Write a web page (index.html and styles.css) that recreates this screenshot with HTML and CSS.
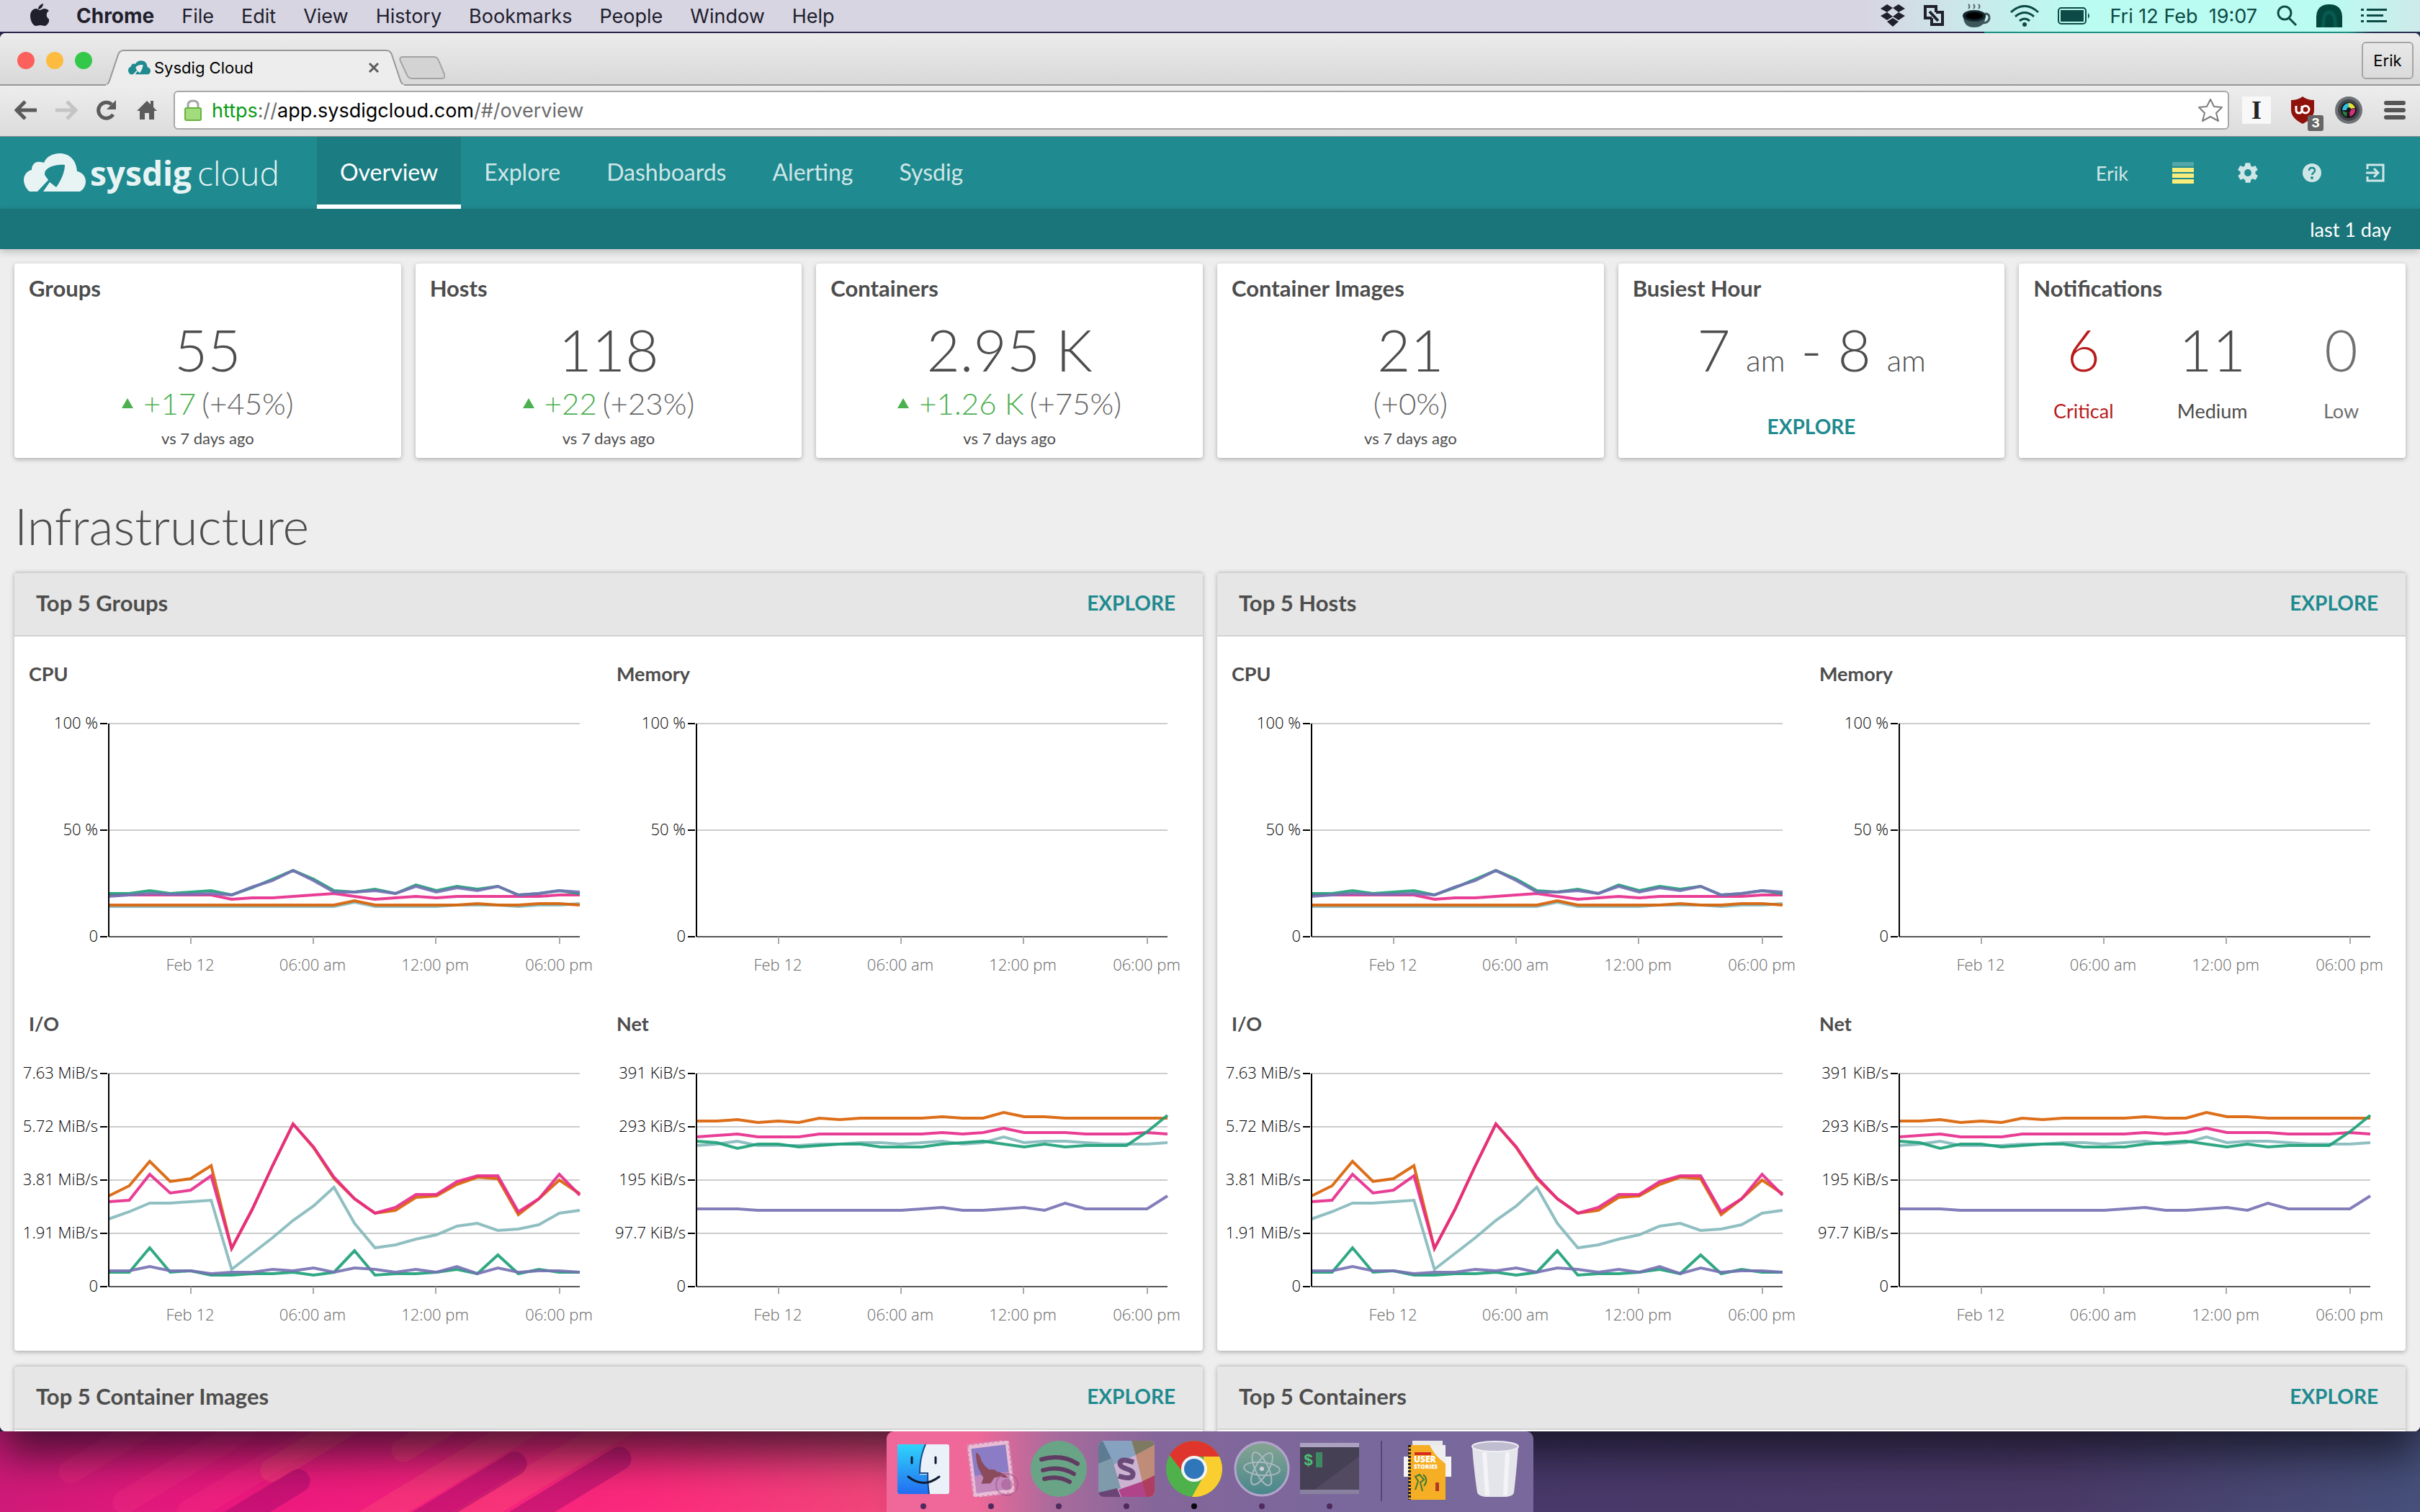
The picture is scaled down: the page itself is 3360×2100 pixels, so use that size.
FILE: index.html
```html
<!DOCTYPE html>
<html lang="en">
<head>
<meta charset="utf-8">
<title>Sysdig Cloud</title>
<link rel="stylesheet" href="styles.css">
</head>
<body>
<svg width="0" height="0" class="defs" aria-hidden="true">
  <symbol id="cloud-mark" viewBox="0 0 86 54">
    <path fill-rule="evenodd" d="M8 53C3 49 0 43 0 37c0-7 5-13 11-14C11 16 16 11 22 12c2 0 4 0 6 1C31 5 40 0 50 0c13 0 23 9 24 25 7 1 12 7 12 14 0 6-3 11-8 14H27l9-13 9 7C51 39 57 27 57 16 45 15 30 19 29 28c0 4 4 6 5 9L19 53Z"/>
  </symbol>
</svg>
<div class="desktop">
  <header class="menubar">
    <nav class="menus" aria-label="Menu bar">
      <button class="menu apple" aria-label="Apple"><svg width="26" height="34" viewBox="0 0 26 34"><path d="M18 0c0 4-3 8-7 8 0-4 3-7 7-8ZM13 9c2 0 4-2 7-2 2 0 4 1 6 3-5 3-4 10 1 12-1 4-4 9-7 9-2 0-4-1-6-1s-4 1-6 1C4 31 0 24 0 17 0 11 4 7 8 7c2 0 4 2 5 2Z"/></svg></button>
      <button class="menu app-name">Chrome</button>
      <button class="menu">File</button>
      <button class="menu">Edit</button>
      <button class="menu">View</button>
      <button class="menu">History</button>
      <button class="menu">Bookmarks</button>
      <button class="menu">People</button>
      <button class="menu">Window</button>
      <button class="menu">Help</button>
    </nav>
    <div class="status">
      <svg width="34" height="32" viewBox="0 0 34 32"><path d="M9 0l8 5-8 6-9-5ZM25 0l9 6-9 5-8-6ZM0 16l9-5 8 6-8 5ZM34 16l-9-5-8 6 8 5ZM17 19l8 5-8 7-8-7Z"/></svg>
      <svg width="28" height="30" viewBox="0 0 28 30"><path d="M11 18H2V2h15v8" fill="none" stroke="#20202c" stroke-width="4"/><path d="M17 10h9v17H11V18" fill="none" stroke="#20202c" stroke-width="4"/><path d="M8 9l12 13" stroke="#20202c" stroke-width="4"/></svg>
      <svg width="40" height="34" viewBox="0 0 40 34"><path d="M8 7q3-3 0-6M15 7q3-3 0-6M22 7q3-3 0-6" stroke="#59656b" stroke-width="2" fill="none"/><path d="M1 15h31q0 18-16 18T1 15Z" fill="#3c5659"/><ellipse cx="16" cy="17" rx="16" ry="8" fill="#14292e"/><ellipse cx="16" cy="17" rx="12" ry="5" fill="#000"/><path d="M31 14q7 0 6 7-2 6-9 6" fill="none" stroke="#3c5659" stroke-width="3"/></svg>
      <svg width="40" height="30" viewBox="0 0 40 30"><g fill="none" stroke="#0d4a45" stroke-width="3"><path d="M1 10Q20-7 39 10M7 16q13-11 26 0M13 22q7-6 14 0"/></g><circle cx="20" cy="27" r="3" fill="#0d4a45"/></svg>
      <svg width="46" height="24" viewBox="0 0 46 24"><rect x="1" y="1" width="38" height="22" rx="4" fill="none" stroke="#0d4a45" stroke-width="2"/><rect x="4" y="4" width="32" height="16" fill="#0d4a45"/><path d="M42 8q4 4 0 8Z" fill="#0d4a45"/></svg>
      <time class="clock">Fri 12 Feb&nbsp; 19:07</time>
      <svg width="30" height="30" viewBox="0 0 30 30" fill="none" stroke="#0d4a45" stroke-width="3"><circle cx="12" cy="11" r="9"/><path d="M18 18l10 10"/></svg>
      <svg width="36" height="32" viewBox="0 0 36 32"><path d="M0 32V17Q1 0 18 0t18 17v15Z" fill="#02463d"/><path d="M7 32q0-24 11-24t11 24Z" fill="#075a50"/><path d="M12 32q0-18 6-18t6 18Z" fill="#02463d"/></svg>
      <svg width="36" height="22" viewBox="0 0 36 22" fill="#0d4a45"><path d="M0 1h4v3H0ZM0 9h4v3H0ZM0 17h4v3H0ZM8 1h28v3H8ZM8 9h23v3H8ZM8 17h28v3H8Z"/></svg>
    </div>
  </header>

  <section class="window">
    <div class="tabstrip">
      <div class="lights">
        <button class="light close" aria-label="Close"></button>
        <button class="light minimise" aria-label="Minimise"></button>
        <button class="light zoom" aria-label="Zoom"></button>
      </div>
      <div class="tab">
        <svg class="tab-shape" viewBox="0 0 418 50" preserveAspectRatio="none"><path d="M0 50Q5 49 7 43L19 7q2-6 8-6h364q6 0 8 6l12 36q2 6 7 7" fill="#ededed" stroke="#979797" stroke-width="2"/><path d="M2 50h414" stroke="#ededed" stroke-width="3"/></svg>
        <svg class="favicon" width="31" height="20" fill="#1f8a8f"><use href="#cloud-mark"/></svg>
        <span class="tab-title">Sysdig Cloud</span>
        <button class="tab-close" aria-label="Close tab"><svg width="16" height="16" viewBox="0 0 16 16"><path d="M2 2l12 12M14 2L2 14" stroke="#5c5c5c" stroke-width="3"/></svg></button>
      </div>
      <button class="new-tab" aria-label="New tab"><svg width="64" height="32" viewBox="0 0 64 32"><path d="M5 1h43q5 0 7 5l8 19q2 6-4 6H18q-5 0-7-5L2 7Q0 1 5 1Z" fill="#d3d3d3" stroke="#a3a3a3" stroke-width="2"/></svg></button>
      <button class="profile">Erik</button>
    </div>
    <div class="toolbar">
      <button class="tool" aria-label="Back"><svg width="32" height="28" viewBox="0 0 32 28"><path d="M15 2L3 14l12 12M4 14h27" fill="none" stroke="#5b5b5b" stroke-width="5"/></svg></button>
      <button class="tool" aria-label="Forward"><svg width="32" height="28" viewBox="0 0 32 28"><path d="M17 2l12 12-12 12M28 14H1" fill="none" stroke="#c4c4c4" stroke-width="5"/></svg></button>
      <button class="tool" aria-label="Reload"><svg width="32" height="28" viewBox="0 0 32 28"><path d="M25 20A11 11 0 1 1 23 6" fill="none" stroke="#5b5b5b" stroke-width="5"/><path d="M29 0v13H16Z" fill="#5b5b5b"/></svg></button>
      <button class="tool" aria-label="Home"><svg width="32" height="28" viewBox="0 0 32 28"><path d="M16 1l5 5V1h4v9l5 5h-4v12h-7v-9h-6v9H6V15H2Z" fill="#5b5b5b"/></svg></button>
      <div class="address">
        <svg width="24" height="30" viewBox="0 0 24 30"><path d="M5 13V8q0-6 7-6t7 6v5" fill="none" stroke="#a5a5a5" stroke-width="3"/><rect x="1" y="12" width="22" height="17" rx="2" fill="#a2dc7c" stroke="#67b43e" stroke-width="2"/></svg>
        <div class="url" role="textbox" contenteditable="true" spellcheck="false" aria-label="Address"><span class="scheme">https</span><span class="dim">://</span>app.sysdigcloud.com<span class="dim">/#/overview</span></div>
        <svg width="36" height="34" viewBox="0 0 36 34"><path d="M18 2l5 10 11 1-8 8 3 11-11-6-11 6 3-11-8-8 11-1Z" fill="#fff" stroke="#7d7d7d" stroke-width="2" stroke-linejoin="round"/></svg>
      </div>
      <div class="extensions">
        <button class="ext instapaper" aria-label="Instapaper">I</button>
        <button class="ext" aria-label="uBlock Origin"><svg width="36" height="38" viewBox="0 0 36 38"><path d="M18 0q6 5 16 5v14q0 11-16 19Q2 30 2 19V5q10 0 16-5Z" fill="#8f110c"/><path d="M9 13v6q0 4 4 4t4-4v-6" fill="none" stroke="#fff" stroke-width="3"/><circle cx="22" cy="18" r="5" fill="none" stroke="#fff" stroke-width="3"/></svg><span class="count">3</span></button>
        <button class="ext" aria-label="Camera"><svg width="38" height="38" viewBox="0 0 38 38"><circle cx="19" cy="19" r="19" fill="#6e7276"/><circle cx="19" cy="19" r="15" fill="#45494e"/><circle cx="19" cy="19" r="11" fill="#15151c"/><path d="M19 9a10 10 0 0 0-9 10l6 0a4 4 0 0 1 3-4Z" fill="#2fc3e0"/><path d="M19 9a10 10 0 0 1 9 7l-6 1a4 4 0 0 0-3-2Z" fill="#e6e03a"/><path d="M28 17a10 10 0 0 1-7 11l-1-6a4 4 0 0 0 2-4Z" fill="#d5307b"/><path d="M10 20a10 10 0 0 0 6 8l1-6Z" fill="#2c7a3c"/></svg></button>
        <button class="ext" aria-label="Menu"><svg width="30" height="26" viewBox="0 0 30 26" fill="#555"><rect width="30" height="6" rx="3"/><rect y="10" width="30" height="6" rx="3"/><rect y="20" width="30" height="6" rx="3"/></svg></button>
      </div>
    </div>

    <div class="app">
      <header class="app-nav">
        <a class="brand" href="#/"><svg width="86" height="54" fill="#e8f4f4"><use href="#cloud-mark"/></svg><span class="wordmark"><b>sysdig</b>cloud</span></a>
        <nav class="links" aria-label="Main">
          <a class="link active" href="#/overview">Overview</a>
          <a class="link" href="#/explore">Explore</a>
          <a class="link" href="#/dashboards">Dashboards</a>
          <a class="link" href="#/alerting">Alerting</a>
          <a class="link" href="#/sysdig">Sysdig</a>
        </nav>
        <div class="account">
          <a class="user" href="#/profile">Erik</a>
          <a href="#/usage" aria-label="Usage"><svg width="30" height="30" viewBox="0 0 30 30"><rect width="30" height="6" rx="1" fill="#52a6aa"/><path d="M0 8h30v6H0ZM0 16h30v6H0ZM0 24h30v6H0Z" fill="#f8ec7a"/></svg></a>
          <a href="#/settings" aria-label="Settings"><svg width="28" height="28" viewBox="2 2 20 20"><path fill="#cfe6e7" d="M19.4 13c0-.3.1-.6.1-1s0-.7-.1-1l2.1-1.600c.2-.2.2-.4.1-.6l-2-3.500c-.1-.2-.4-.3-.6-.2l-2.500 1c-.5-.4-1.100-.7-1.700-1l-.4-2.600c0-.2-.2-.4-.5-.4h-4c-.2 0-.4.2-.5.4l-.4 2.600c-.6.300-1.200.6-1.700 1l-2.500-1c-.2-.1-.5 0-.6.2l-2 3.500c-.1.2-.1.5.1.600L4.600 11c0 .3-.1.600-.1 1s0 .7.1 1l-2.100 1.600c-.2.200-.2.400-.1.600l2 3.500c.1.200.4.300.6.200l2.500-1c.5.400 1.100.7 1.700 1l.4 2.600c0 .2.2.4.5.4h4c.2 0 .4-.2.500-.4l.4-2.600c.6-.3 1.200-.6 1.700-1l2.500 1c.2.100.5 0 .6-.2l2-3.500c.1-.2.1-.5-.1-.6ZM12 15.500a3.500 3.500 0 1 1 0-7 3.500 3.500 0 0 1 0 7Z"/></svg></a>
          <a href="#/help" aria-label="Help"><svg width="28" height="28" viewBox="0 0 28 28"><circle cx="14" cy="14" r="13" fill="#cfe6e7"/><path d="M10 11q0-4 4-4t4 4q0 2-2 3-2 2-2 3" fill="none" stroke="#1f8a8f" stroke-width="2.500"/><circle cx="14" cy="21" r="2" fill="#1f8a8f"/></svg></a>
          <a href="#/logout" aria-label="Log out"><svg width="26" height="26" viewBox="0 0 26 26" fill="none" stroke="#cfe6e7" stroke-width="3"><path d="M2 8V2h22v22H2v-6M0 13h16M11 7l6 6-6 6"/></svg></a>
        </div>
      </header>
      <div class="timebar"><button class="range">last 1 day</button></div>

      <main class="content">
        <div class="cards">
          <section class="card">
            <h2>Groups</h2>
            <p class="figure">55</p>
            <p class="delta"><i class="up"></i><span class="gain">+17</span> (+45%)</p>
            <p class="since">vs 7 days ago</p>
          </section>
          <section class="card">
            <h2>Hosts</h2>
            <p class="figure">118</p>
            <p class="delta"><i class="up"></i><span class="gain">+22</span> (+23%)</p>
            <p class="since">vs 7 days ago</p>
          </section>
          <section class="card">
            <h2>Containers</h2>
            <p class="figure">2.95 K</p>
            <p class="delta"><i class="up"></i><span class="gain">+1.26 K</span> (+75%)</p>
            <p class="since">vs 7 days ago</p>
          </section>
          <section class="card">
            <h2>Container Images</h2>
            <p class="figure">21</p>
            <p class="delta">(+0%)</p>
            <p class="since">vs 7 days ago</p>
          </section>
          <section class="card">
            <h2>Busiest Hour</h2>
            <p class="figure">7 <small>am</small> - 8 <small>am</small></p>
            <a class="explore" href="#/explore">EXPLORE</a>
          </section>
          <section class="card">
            <h2>Notifications</h2>
            <div class="levels">
              <div class="level critical"><p class="figure">6</p><p class="level-name">Critical</p></div>
              <div class="level"><p class="figure">11</p><p class="level-name">Medium</p></div>
              <div class="level low"><p class="figure">0</p><p class="level-name">Low</p></div>
            </div>
          </section>
        </div>

        <h1>Infrastructure</h1>

        <div class="panels">
          <section class="panel">
            <header class="panel-head"><h2>Top 5 Groups</h2><a class="explore" href="#/explore/groups">EXPLORE</a></header>
            <div class="charts">
              <figure><figcaption>CPU</figcaption><svg class="chart" data-chart="cpu"></svg></figure>
              <figure><figcaption>Memory</figcaption><svg class="chart" data-chart="memory"></svg></figure>
              <figure><figcaption>I/O</figcaption><svg class="chart" data-chart="io"></svg></figure>
              <figure><figcaption>Net</figcaption><svg class="chart" data-chart="net"></svg></figure>
            </div>
          </section>
          <section class="panel">
            <header class="panel-head"><h2>Top 5 Hosts</h2><a class="explore" href="#/explore/hosts">EXPLORE</a></header>
            <div class="charts">
              <figure><figcaption>CPU</figcaption><svg class="chart" data-chart="cpu"></svg></figure>
              <figure><figcaption>Memory</figcaption><svg class="chart" data-chart="memory"></svg></figure>
              <figure><figcaption>I/O</figcaption><svg class="chart" data-chart="io"></svg></figure>
              <figure><figcaption>Net</figcaption><svg class="chart" data-chart="net"></svg></figure>
            </div>
          </section>
          <section class="panel">
            <header class="panel-head"><h2>Top 5 Container Images</h2><a class="explore" href="#/explore/images">EXPLORE</a></header>
            <div class="charts"></div>
          </section>
          <section class="panel">
            <header class="panel-head"><h2>Top 5 Containers</h2><a class="explore" href="#/explore/containers">EXPLORE</a></header>
            <div class="charts"></div>
          </section>
        </div>
      </main>
    </div>
  </section>

  <footer class="dock-area">
    <svg class="streaks" width="1230" height="112" viewBox="0 0 1230 112" stroke-width="33" stroke-linecap="round">
      <g stroke="#ff3a86" stroke-opacity=".2"><path d="M98 56L263-44M173 98L338-2M262 112L450-2"/></g>
      <g stroke="#ff5a74" stroke-opacity=".3"><path d="M378 54L543-46M560 26L725-74"/><path d="M470 150L780-38M600 150L900-32" stroke-width="36"/></g>
      <g stroke="#a80a6c" stroke-opacity=".5"><path d="M414 69L249 169M715 45L499 176M860 38L630 178"/></g>
    </svg>
    <div class="dock">
      <button class="dock-item dot" aria-label="Finder"><svg width="78" height="78" viewBox="0 0 78 78"><defs><linearGradient id="finder" x1="0" y1="0" x2="0" y2="1"><stop offset="0" stop-color="#2fd4fb"/><stop offset="1" stop-color="#236df0"/></linearGradient></defs><rect x="3" y="5" width="72" height="69" rx="3" fill="#eaf1f9"/><path d="M42 5H6q-3 0-3 3v63q0 3 3 3h41q-2-13-2-27H34q0-24 8-42Z" fill="url(#finder)"/><path d="M42 5q-8 18-8 40h11q0 16 2 29" fill="none" stroke="#1b4a86" stroke-width="2"/><path d="M23 23v8M56 23v8M18 50q21 17 43 0" fill="none" stroke="#101c30" stroke-width="3" stroke-linecap="round"/></svg></button>
      <button class="dock-item dot" aria-label="Mail"><svg width="78" height="78" viewBox="0 0 78 78"><g transform="rotate(-7 39 39)"><rect x="10" y="2" width="58" height="74" fill="#e8bcd4"/><rect x="10" y="2" width="58" height="74" fill="none" stroke="#d97fae" stroke-width="3" stroke-dasharray="3 4"/><rect x="15" y="8" width="48" height="62" fill="#8c7cc6"/><path d="M15 46h48v24H15Z" fill="#c389bd"/><path d="M21 14q5 2 6 12 4 10 10 14 6-1 10 4 8 2 14 10-6 0-10-3l-9 1-6 7-13-1 4-8q-9-18-6-36Z" fill="#8b4b5c"/></g><circle cx="61" cy="61" r="15" fill="none" stroke="#a0568a" stroke-width="2" opacity=".6"/><circle cx="61" cy="61" r="8" fill="#a0568a" opacity=".5"/></svg></button>
      <button class="dock-item dot" aria-label="Spotify"><svg width="78" height="78" viewBox="0 0 78 78"><circle cx="39" cy="39" r="39" fill="#6aa487"/><path d="M15 26q28-8 50 6M17 41q23-7 43 5M19 53q19-5 35 4" fill="none" stroke="#603c62" stroke-width="6" stroke-linecap="round"/></svg></button>
      <button class="dock-item dot" aria-label="Slack"><svg width="78" height="78" viewBox="0 0 78 78"><clipPath id="slack-clip"><rect width="78" height="78" rx="7"/></clipPath><g clip-path="url(#slack-clip)"><rect width="78" height="78" fill="#cdb3d2"/><path d="M6 0h40l6 20-33 14Z" fill="#86a2c0"/><path d="M0 0h6l12 25L0 32Z" fill="#5d7c91"/><path d="M46 0h32v6L52 20Z" fill="#7d7a61"/><path d="M78 6v42l-17 9-9-37Z" fill="#bf8c78"/><path d="M78 48v30h-12l-6-21Z" fill="#ae3d60"/><path d="M60 57l7 21H32l-4-10Z" fill="#b0448b"/><path d="M0 32l19-8 12 42-31 7Z" fill="#7e9aab"/><path d="M0 72l26-6 5 12H0Z" fill="#6a4474"/></g><path d="M49 30q-19-7-19 2 0 4 9 7 10 3 9 8-1 8-20 2" fill="none" stroke="#6c4a7a" stroke-width="7"/></svg></button>
      <button class="dock-item dot front" aria-label="Chrome"><svg width="78" height="78" viewBox="0 0 78 78"><circle cx="39" cy="39" r="39" fill="#4fb14c"/><path d="M5 20A39 39 0 0 1 74 22H39L22 42Z" fill="#e0352d"/><path d="M74 22A39 39 0 0 1 36 78l18-32-2-24Z" fill="#fbce2f"/><circle cx="39" cy="39" r="18" fill="#f3f3f3"/><circle cx="39" cy="39" r="14" fill="#2f76bb"/></svg></button>
      <button class="dock-item dot" aria-label="Atom"><svg width="78" height="78" viewBox="0 0 78 78"><defs><linearGradient id="atom" x1="0" y1="0" x2="0" y2="1"><stop offset="0" stop-color="#86a592"/><stop offset="1" stop-color="#47868c"/></linearGradient></defs><circle cx="39" cy="39" r="37" fill="url(#atom)" stroke="#b5a5cc" stroke-width="3"/><g fill="none" stroke="#a9b8bf" stroke-width="2"><ellipse cx="39" cy="39" rx="25" ry="9" transform="rotate(5 39 39)"/><ellipse cx="39" cy="39" rx="25" ry="9" transform="rotate(65 39 39)"/><ellipse cx="39" cy="39" rx="25" ry="9" transform="rotate(121 39 39)"/></g><circle cx="39" cy="39" r="3" fill="#d0cfdc"/></svg></button>
      <button class="dock-item dot terminal" aria-label="Terminal"><svg width="82" height="78" viewBox="0 0 82 78"><rect y="3" width="82" height="71" fill="#464055"/><rect y="3" width="82" height="6" fill="#aba1c1"/><rect y="68" width="82" height="6" fill="#8a809f"/><path d="M20 68L82 22v46Z" fill="#514a60"/><rect x="22" y="16" width="9" height="21" fill="#3d8a62"/><text x="5" y="34" font-family="Liberation Mono" font-weight="700" font-size="22" fill="#4bc274">$</text></svg></button>
      <span class="divider"></span>
      <button class="dock-item" aria-label="Documents"><svg width="78" height="86" viewBox="0 0 78 86"><path d="M6 22h66v28H6Z" fill="#f4f4f4"/><path d="M18-3h42v30H18Z" fill="#e9e9e9"/><path d="M13 6h51v76H13Z" fill="#f6af25"/><path d="M42 6h22v26Q48 20 42 6Z" fill="#eee"/><path d="M14 6v76" stroke="#222" stroke-width="4" stroke-dasharray="3 2"/><path d="M21 16h23v4H21Z" fill="#d52b25"/><text x="20" y="30" font-family="Open Sans" font-weight="800" font-size="12" fill="#fff">USER</text><text x="20" y="39" font-family="Open Sans" font-weight="800" font-size="8" fill="#fff">STORIES</text><path d="M22 68l4-12-4-6 6-3 6 7-5 4 3 12M33 47q8 7 1 16" fill="none" stroke="#3c7c35" stroke-width="2"/><path d="M50 58h5v12h-5Z" fill="#b13b28"/></svg></button>
      <button class="dock-item" aria-label="Trash"><svg width="78" height="78" viewBox="0 0 78 78"><path d="M7 8q2 30 7 64 2 7 26 7t25-7q4-34 6-64Z" fill="#e4e5ea"/><path d="M24 16l4 60M56 16l-3 60" stroke="#f4f4f6" stroke-width="6"/><ellipse cx="39" cy="8" rx="32" ry="7" fill="#c0bdd0" stroke="#efeff4" stroke-width="2"/></svg></button>
    </div>
  </footer>
</div>
<script src="charts.js"></script>
</body>
</html>
```
FILE: styles.css
```css
* { box-sizing: border-box; }
body { margin: 0; }
h1, h2, p, figure { margin: 0; }
button { margin: 0; padding: 0; border: 0; background: none; font: inherit; color: inherit; }
a { color: inherit; text-decoration: none; }
svg { display: block; flex: none; }
.defs { position: absolute; }

.desktop {
  display: grid;
  grid-template-rows: 44px minmax(0, 1fr) 112px;
  height: 100vh;
  overflow: hidden;
  font-family: Inter, "Liberation Sans", sans-serif;
  background: linear-gradient(90deg, #2d2650 82%, #1d9f8f 82%, #1d9f8f 97%, #2b3357 98%);
}

/* Menu bar */
.menubar {
  display: flex;
  justify-content: space-between;
  align-items: center;
  padding: 0 46px 0 42px;
  background: linear-gradient(90deg, #d8d5e3 77%, #bafcf2 86%, #bafcf2 96%, #cdeaea);
  color: #20202c;
  font-size: 27px;
  position: relative;
  z-index: 2;
}
.menus { display: flex; align-items: center; gap: 38px; }
.menu { white-space: nowrap; }
.apple { fill: #20202c; }
.app-name { font-size: 28px; font-weight: 700; }
.status { display: flex; align-items: center; gap: 26px; fill: #20202c; }
.clock { color: #0d4a45; white-space: pre; }

/* Browser window */
.window {
  display: flex;
  flex-direction: column;
  margin-top: 2px;
  border-radius: 8px;
  overflow: hidden;
  background: #eee;
  box-shadow: 0 32px 60px rgba(10, 10, 20, .7);
  position: relative;
  z-index: 1;
}
.tabstrip {
  display: flex;
  align-items: flex-end;
  flex: none;
  height: 73px;
  padding: 0 9px 0 24px;
  border-bottom: 2px solid #979797;
  background: linear-gradient(#ececec, #d8d8d8);
  font-size: 22px;
  color: #000;
}
.lights { display: flex; gap: 16px; margin-bottom: 21px; }
.light { width: 24px; height: 24px; border-radius: 50%; }
.close { background: #fc605c; }
.minimise { background: #fdbc40; }
.zoom { background: #34c84a; }
.tab {
  display: flex;
  align-items: center;
  position: relative;
  width: 418px;
  height: 50px;
  margin: 0 0 -2px 17px;
  padding: 0 36px 0 33px;
}
.tab-shape { position: absolute; inset: 0; width: 100%; height: 100%; }
.favicon, .tab-title, .tab-close { position: relative; }
.tab-title { flex: 1; margin-left: 5px; }
.new-tab { margin: 0 0 7px -9px; }
.profile {
  margin: 0 0 7px auto;
  width: 72px;
  height: 52px;
  border: 2px solid #a5a5a5;
  border-radius: 6px;
}
.toolbar {
  display: flex;
  align-items: center;
  flex: none;
  gap: 24px;
  height: 71px;
  padding: 0 15px 2px 20px;
  border-bottom: 1px solid #8a8a8a;
  background: linear-gradient(#ededed, #dcdcdc);
}
.address {
  display: flex;
  align-items: center;
  flex: 1;
  height: 54px;
  margin: 0 -6px 0 -3px;
  padding: 0 6px 0 13px;
  border: 2px solid #a8a8a8;
  border-radius: 6px;
  background: #fff;
  font-size: 27px;
  color: #000;
}
.url { flex: 1; margin-left: 14px; outline: 0; }
.scheme { color: #0a9b15; }
.dim { color: #6b6b6b; }
.extensions { display: flex; align-items: center; gap: 24px; }
.ext { display: grid; place-items: center; width: 40px; height: 38px; position: relative; }
.instapaper { background: #f8f8f8; font: 700 36px/38px "Liberation Serif", serif; color: #222; }
.count {
  position: absolute;
  right: -9px;
  bottom: -10px;
  width: 22px;
  height: 22px;
  border-radius: 3px;
  background: #666;
  color: #fff;
  font: 700 18px/22px Inter, sans-serif;
}

/* App chrome */
.app { flex: 1; min-height: 0; font-family: Lato, "Open Sans", sans-serif; color: #4d4d4d; background: #eee; }
.app-nav { display: flex; height: 100px; background: #1f8a8f; color: #cfe6e7; font-size: 32px; }
.brand {
  display: flex;
  align-items: center;
  gap: 6px;
  width: 440px;
  padding-left: 33px;
  font: 300 46px/100px "Open Sans", sans-serif;
  color: #e8f4f4;
  white-space: nowrap;
}
.wordmark { display: flex; gap: 8px; }
.wordmark b { font-weight: 700; }
.links { display: flex; }
.link { padding: 0 32px; line-height: 98px; border-bottom: 6px solid transparent; height: 100px; }
.active { background: #1b7c81; border-color: #fff; color: #fff; }
.account { display: flex; align-items: center; gap: 61px; margin-left: auto; padding-right: 49px; }
.user { font-size: 27px; }
.timebar {
  display: flex;
  justify-content: flex-end;
  height: 56px;
  padding-right: 40px;
  background: #1a757a;
  box-shadow: 0 4px 10px rgba(0, 0, 0, .2);
  color: #fff;
  font-size: 27px;
}
.content { padding: 20px; }

/* Summary cards */
.cards { display: grid; grid-template-columns: repeat(6, 1fr); gap: 20px; }
.card, .panel { background: #fff; border-radius: 4px; box-shadow: 0 2px 6px rgba(0, 0, 0, .28); }
.card { min-height: 270px; padding-top: 14px; text-align: center; }
.card h2 { padding-left: 20px; text-align: left; }
h2 { font-size: 31px; line-height: 40px; font-weight: 700; }
.figure { margin-top: 21px; font-size: 80px; line-height: 88px; font-weight: 300; white-space: nowrap; }
.figure small { font-size: 42px; }
.delta { display: flex; justify-content: center; align-items: center; gap: 8px; font-size: 42px; line-height: 62px; font-weight: 300; color: #666; }
.up { border: 8px solid transparent; border-top: 0; border-bottom: 14px solid #4caf50; margin-right: 6px; }
.gain { color: #4caf50; }
.since { font-size: 22px; line-height: 36px; }
.explore { color: #1f8a8f; font-size: 28px; line-height: 40px; font-weight: 700; }
.card .explore { display: inline-block; margin-top: 28px; }
.levels { display: grid; grid-template-columns: repeat(3, 1fr); }
.level-name { margin-top: 22px; font-size: 27px; line-height: 40px; }
.critical { color: #b71c1c; }
.low { color: #707070; }

/* Chart panels */
h1 { margin: 54px 0 24px; font-size: 70px; line-height: 80px; font-weight: 300; }
.panels { display: grid; grid-template-columns: repeat(2, 1fr); gap: 20px; }
.panel-head {
  display: flex;
  justify-content: space-between;
  align-items: center;
  height: 90px;
  padding: 0 38px 4px 30px;
  border: solid #d2d2d2;
  border-width: 2px 0;
  border-radius: 4px 4px 0 0;
  background: #e6e6e6;
}
.charts { display: grid; grid-template-columns: repeat(2, 1fr); padding: 10px 9px; }
figcaption { padding: 22px 11px 4px; font-size: 27px; line-height: 40px; font-weight: 700; }
.chart { width: 100%; height: auto; overflow: visible; font: 300 22px "Open Sans", sans-serif; }
.grid, .base, .axis, .mark, .tick { stroke-width: 2; shape-rendering: crispEdges; }
.grid { stroke: #ccc; }
.base { stroke: #555; }
.axis, .mark { stroke: #000; }
.tick { stroke: #aaa; }
.y-label { text-anchor: end; fill: #000; }
.x-label { text-anchor: middle; fill: #666; }
.line { fill: none; stroke-width: 4; stroke-opacity: .9; }

/* Wallpaper strip and dock */
.dock-area {
  display: flex;
  justify-content: center;
  position: relative;
  background: linear-gradient(90deg, #cf1a78, #ec187e 10%, #fc2a7c 27%, #f0457a 36%, #46386a 55%, #4a3a68 85%, #46507a);
}
.streaks { position: absolute; left: 0; top: 0; }
.dock {
  display: flex;
  gap: 16px;
  position: relative;
  z-index: 2;
  padding: 13px 14px 0 12px;
  border-radius: 10px 10px 0 0;
  background: linear-gradient(90deg, #f0679a, #ee6898 14%, #a86b9c 26%, #84669a 42%, #77689c 80%, #79689c);
}
.dock-item { display: flex; flex-direction: column; align-items: center; gap: 9px; width: 78px; }
.dot::after { content: ""; width: 8px; height: 8px; border-radius: 50%; background: #502a5c; }
.front::after { background: #0a0510; }
.divider { width: 2px; height: 84px; margin: 0 8px 0 16px; background: #56477a; }
```
FILE: charts.js
```js
// Each series lists heights above the baseline, one per hour, in chart units (296 = top of the axis).
const TEAL = '#84b8bb', ORANGE = '#d95f02', PINK = '#e7298a', GREEN = '#1b9e77', PURPLE = '#7570b3';
const PERCENT = ['0', '50 %', '100 %'];
const CHARTS = {
  cpu: { labels: PERCENT, series: [
    [TEAL, [42,42,42,42,42,42,42,42,42,42,42,42,48,42,42,42,42,44,44,44,42,44,44,46]],
    [ORANGE, [44,44,44,44,44,44,44,44,44,44,44,44,50,44,44,44,44,44,46,44,44,46,46,44]],
    [PINK, [58,58,58,58,58,58,52,54,54,56,58,60,56,52,54,56,54,56,56,56,56,56,58,58]],
    [GREEN, [60,60,64,60,62,64,58,68,80,92,80,64,62,66,60,72,64,70,66,70,58,60,64,60]],
    [PURPLE, [56,58,60,59,59,60,58,69,78,92,78,62,62,64,60,70,62,68,64,70,58,60,64,62]]
  ]},
  memory: { labels: PERCENT, series: [] },
  io: { labels: ['0', '1.91 MiB/s', '3.81 MiB/s', '5.72 MiB/s', '7.63 MiB/s'], series: [
    [ORANGE, [126,140,174,146,150,168,53,107,168,226,193,150,122,102,106,124,126,142,152,150,100,122,148,129]],
    [PINK, [118,120,156,130,134,154,53,107,168,226,194,152,122,102,110,128,128,146,154,154,104,122,156,127]],
    [TEAL, [94,104,116,116,118,120,24,46,68,92,112,138,88,54,58,66,72,84,88,78,80,86,102,106]],
    [GREEN, [20,20,54,20,22,16,16,18,18,20,16,20,50,16,18,18,20,24,18,44,18,24,20,20]],
    [PURPLE, [22,22,28,22,22,18,20,20,24,22,26,20,26,24,20,24,20,28,18,26,20,22,22,20]]
  ]},
  net: { labels: ['0', '97.7 KiB/s', '195 KiB/s', '293 KiB/s', '391 KiB/s'], series: [
    [TEAL, [196,198,202,196,196,196,198,198,200,200,198,200,202,198,200,208,200,202,202,200,198,198,198,200]],
    [ORANGE, [230,230,232,228,230,228,234,232,234,234,234,234,236,234,234,242,236,236,234,234,234,234,234,234]],
    [PINK, [208,210,212,208,208,208,212,212,212,212,212,212,214,212,214,220,214,214,214,212,212,212,214,212]],
    [GREEN, [202,200,192,198,198,194,196,198,198,194,194,194,198,200,202,198,194,198,194,196,196,196,215,238]],
    [PURPLE, [108,108,108,106,106,106,106,106,106,106,106,108,110,106,106,108,110,106,116,108,108,108,108,126]]
  ]}
};
const LEFT = 122, RIGHT = 776, BASE = 341, RISE = 296;
const TIMES = [[236, 'Feb 12'], [406, '06:00 am'], [576, '12:00 pm'], [748, '06:00 pm']];

function add(svg, tag, attrs, text) {
  const node = document.createElementNS('http://www.w3.org/2000/svg', tag);
  for (const key in attrs) node.setAttribute(key, attrs[key]);
  if (text) node.textContent = text;
  svg.appendChild(node);
}

document.querySelectorAll('.chart').forEach(svg => {
  const { labels, series } = CHARTS[svg.dataset.chart];
  svg.setAttribute('viewBox', '0 0 816 420');
  labels.forEach((label, i) => {
    const y = BASE - RISE * i / (labels.length - 1);
    add(svg, 'path', { class: i ? 'grid' : 'base', d: `M${LEFT} ${y}H${RIGHT}` });
    add(svg, 'path', { class: 'mark', d: `M${LEFT - 12} ${y}h10` });
    add(svg, 'text', { class: 'y-label', x: LEFT - 15, y: y + 7 }, label);
  });
  TIMES.forEach(([x, label]) => {
    add(svg, 'path', { class: 'tick', d: `M${x} ${BASE}v10` });
    add(svg, 'text', { class: 'x-label', x: x - 1, y: BASE + 47 }, label);
  });
  series.forEach(([color, values]) => {
    const step = (RIGHT - LEFT) / (values.length - 1);
    const points = values.map((v, i) => `${LEFT + i * step},${BASE - v}`).join(' ');
    add(svg, 'polyline', { class: 'line', stroke: color, points });
  });
  add(svg, 'path', { class: 'axis', d: `M${LEFT} ${BASE}V${BASE - RISE}` });
});
```
